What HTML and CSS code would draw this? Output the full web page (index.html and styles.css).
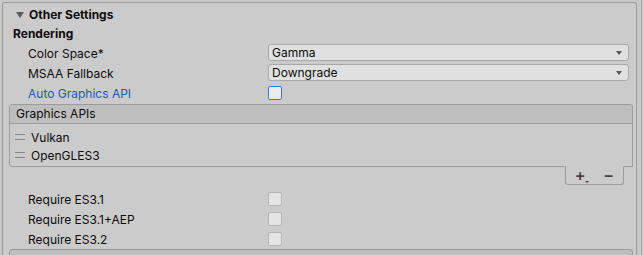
FILE: index.html
```html
<!DOCTYPE html>
<html lang="en">
<head>
  <meta charset="UTF-8" />
  <title>Player Settings - Other Settings</title>
  <link rel="stylesheet" href="styles.css">
</head>
<body>
  <div class="window">
    <div class="panel">
      <div class="foldout">
        <span class="fold-arrow"></span>
        <span>Other Settings</span>
      </div>
      <div class="section-title">Rendering</div>

      <div class="row">
        <label class="field-label">Color Space*</label>
        <div class="dropdown"><span>Gamma</span><span class="drop-arrow"></span></div>
      </div>
      <div class="row">
        <label class="field-label">MSAA Fallback</label>
        <div class="dropdown"><span>Downgrade</span><span class="drop-arrow"></span></div>
      </div>
      <div class="row">
        <label class="field-label focused">Auto Graphics API</label>
        <span class="checkbox focused"></span>
      </div>

      <div class="list">
        <div class="list-header">Graphics APIs</div>
        <div class="list-body">
          <div class="list-item"><span class="handle"></span>Vulkan</div>
          <div class="list-item"><span class="handle"></span>OpenGLES3</div>
        </div>
      </div>
      <div class="list-footer">
        <span class="add-btn">+<span class="add-arrow"></span></span>
        <span class="remove-btn">&minus;</span>
      </div>

      <div class="row req">
        <label class="field-label">Require ES3.1</label>
        <span class="checkbox"></span>
      </div>
      <div class="row req">
        <label class="field-label">Require ES3.1+AEP</label>
        <span class="checkbox"></span>
      </div>
      <div class="row req">
        <label class="field-label">Require ES3.2</label>
        <span class="checkbox"></span>
      </div>

      <div class="next-box"></div>
    </div>
    <div class="edge"></div>
  </div>
</body>
</html>
```

FILE: styles.css
```css
body {
  margin: 0;
  background: #c8c8c8;
  font-family: Inter, "Noto Sans", sans-serif;
  font-size: 12px;
  color: #0c0c0c;
  height: 255px;
  overflow: hidden;
}
.window {
  display: flex;
  padding: 2px 0 0 2px;
  height: 253px;
  overflow: hidden;
}
.panel {
  width: 633px;
  border: 1px solid #9c9c9c;
  border-bottom: none;
  border-radius: 3px 3px 0 0;
  background: #cbcbcb;
}
.edge {
  margin-left: 4px;
  width: 1px;
  background: #a8a8a8;
  margin-top: -2px;
}
.foldout {
  height: 22px;
  display: flex;
  align-items: center;
  padding-left: 13px;
  font-weight: 700;
}
.fold-arrow {
  width: 0;
  height: 0;
  border-left: 4.5px solid transparent;
  border-right: 4.5px solid transparent;
  border-top: 6px solid #5a5a5a;
  margin-right: 5px;
  margin-top: 1px;
}
.section-title {
  height: 18px;
  line-height: 18px;
  padding-left: 10px;
  font-weight: 700;
}
.row {
  height: 20px;
  display: flex;
  align-items: center;
}
.field-label {
  width: 240px;
  padding-left: 25px;
  flex-shrink: 0;
}
.field-label.focused {
  color: #2059b0;
}
.dropdown {
  width: 350px;
  height: 15px;
  border: 1px solid #a8a8a8;
  border-radius: 3px;
  background: #e0e0e0;
  display: flex;
  align-items: center;
  justify-content: space-between;
  padding: 0 6px 0 3px;
  margin-top: -1px;
}
.drop-arrow {
  width: 0;
  height: 0;
  border-left: 3px solid transparent;
  border-right: 3px solid transparent;
  border-top: 4px solid #555;
}
.checkbox {
  width: 12px;
  height: 12px;
  border: 1px solid #b4b4b4;
  border-radius: 2px;
  background: #e4e4e4;
}
.checkbox.focused {
  border-color: #3a7ad6;
  background: #ececec;
}
.list {
  margin: 1px 3px 0 6px;
  border: 1px solid #9c9c9c;
  border-radius: 3px 3px 0 3px;
  background: #cbcbcb;
}
.list-header {
  height: 18px;
  line-height: 18px;
  padding-left: 6px;
  background: #bebebe;
  border-bottom: 1px solid #9c9c9c;
  border-radius: 3px 3px 0 0;
}
.list-body {
  padding: 4px 0 2px;
}
.list-item {
  height: 18px;
  display: flex;
  align-items: center;
  padding-left: 5px;
}
.handle {
  width: 10px;
  height: 4px;
  border-top: 1px solid #888;
  border-bottom: 1px solid #888;
  margin-right: 6px;
}
.list-footer {
  margin: -1px 12px 0 auto;
  width: 57px;
  height: 18px;
  border: 1px solid #9c9c9c;
  border-top: none;
  border-radius: 0 0 3px 3px;
  background: #cbcbcb;
  display: flex;
  align-items: center;
  justify-content: space-around;
  font-size: 16px;
  font-weight: 600;
  color: #444;
}
.add-btn {
  position: relative;
}
.add-arrow {
  position: absolute;
  right: -3px;
  bottom: 2px;
  border-left: 2px solid transparent;
  border-right: 2px solid transparent;
  border-top: 2px solid #444;
}
.list-footer + .req {
  margin-top: 4px;
}
.next-box {
  margin: 0 3px 0 6px;
  height: 20px;
  border: 1px solid #9c9c9c;
  border-radius: 3px;
  background: #bebebe;
}
```
